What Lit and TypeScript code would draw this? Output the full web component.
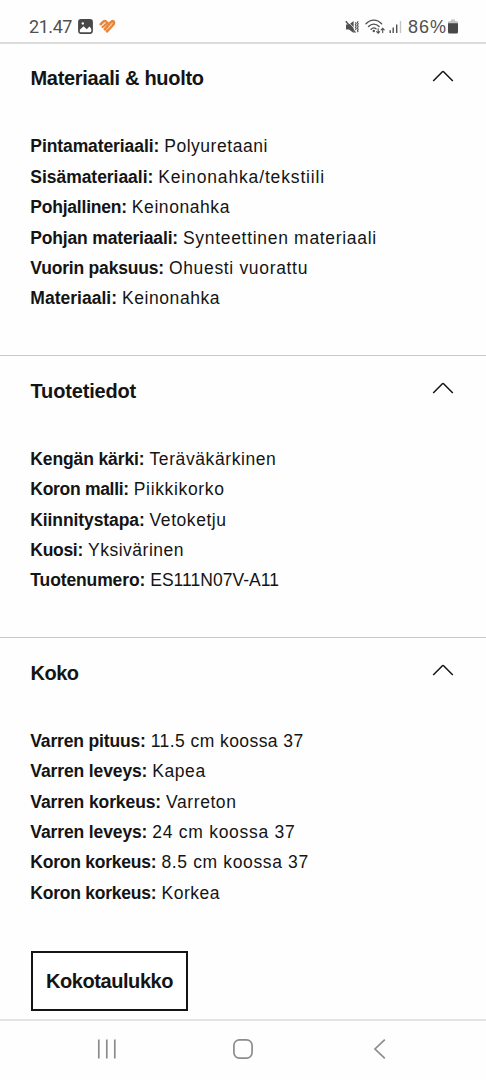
import { LitElement, html, css } from "lit";
import { customElement, property } from "lit/decorators.js";
import { styleMap } from "lit/directives/style-map.js";

interface Row { label: string; value: string; labelTracking: number; valueTracking: number; }
interface Section { title: string; titleTracking: number; rows: Row[]; action?: string; }

const row = (label: string, labelTracking: number, value: string, valueTracking: number): Row => ({ label, value, labelTracking, valueTracking });

const SECTIONS: Section[] = [
  {
    title: "Materiaali & huolto",
    titleTracking: -0.3,
    rows: [
      row("Pintamateriaali:", -0.09, "Polyuretaani", 0.53),
      row("Sisämateriaali:", -0.04, "Keinonahka/tekstiili", 0.85),
      row("Pohjallinen:", -0.22, "Keinonahka", 0.57),
      row("Pohjan materiaali:", -0.17, "Synteettinen materiaali", 0.69),
      row("Vuorin paksuus:", -0.19, "Ohuesti vuorattu", 0.67),
      row("Materiaali:", 0.01, "Keinonahka", 0.57),
    ],
  },
  {
    title: "Tuotetiedot",
    titleTracking: -0.16,
    rows: [
      row("Kengän kärki:", -0.12, "Teräväkärkinen", 0.59),
      row("Koron malli:", -0.3, "Piikkikorko", 0.65),
      row("Kiinnitystapa:", -0.1, "Vetoketju", 0.55),
      row("Kuosi:", -0.3, "Yksivärinen", 0.52),
      row("Tuotenumero:", -0.12, "ES111N07V-A11", 0.03),
    ],
  },
  {
    title: "Koko",
    titleTracking: -0.5,
    rows: [
      row("Varren pituus:", -0.16, "11.5 cm koossa 37", 0.43),
      row("Varren leveys:", -0.12, "Kapea", 0.55),
      row("Varren korkeus:", -0.1, "Varreton", 0.57),
      row("Varren leveys:", -0.12, "24 cm koossa 37", 0.72),
      row("Koron korkeus:", -0.23, "8.5 cm koossa 37", 0.64),
      row("Koron korkeus:", -0.23, "Korkea", 0.55),
    ],
    action: "Kokotaulukko",
  },
];

const tracking = (px: number) => styleMap({ letterSpacing: `${px}px` });

@customElement("status-bar")
class StatusBar extends LitElement {
  static styles = css`
    :host { display: flex; align-items: center; box-sizing: border-box; height: 44px; padding: 11px 28px 0 29px; border-bottom: 2px solid #dcdcdc; color: #505050; }
    .time { font: 18px/32px Roboto, sans-serif; width: 49px; letter-spacing: -0.45px; }
    .spacer { flex: 1; }
    .battery-text { font: 18px/32px "Liberation Sans", sans-serif; letter-spacing: 1px; margin-left: 6px; }
    svg { display: block; flex: none; }
    .heart { margin-left: 6px; }
    .wifi { margin-left: 5px; }
    .signal { margin-left: 4px; }
    .battery { margin-left: 1px; }
  `;
  render() {
    return html`
      <span class="time">21.47</span>
      <svg width="15" height="15" viewBox="0 0 15 15">
        <rect x=".9" y=".9" width="13.2" height="13.2" rx="2" fill="#fff" stroke="#484848" stroke-width="1.6" />
        <path d="M1 1H14V10.5L11.4 7.6L8.8 10.2L5.6 7.2L1 11.5Z" fill="#484848" />
        <circle cx="4.8" cy="4.4" r="1.2" fill="#fff" />
      </svg>
      <svg class="heart" width="17" height="15" viewBox="0 0 17 15" fill="none" stroke="#e8873c" stroke-linecap="round" stroke-linejoin="round">
        <path d="M1.7 5.2L4.5 2.6Q5.8 1.6 7 2.6" stroke-width="2.6" />
        <path d="M3.6 8L8.6 3.6" stroke-width="2.3" />
        <path d="M5.9 10.2L12 3.1Q13.6 1.4 14.7 2.9Q15.4 4.4 14.2 5.7L8 12.2" stroke-width="2.7" />
        <path d="M8.1 10.3L12 6.2" stroke="#fbe3cf" stroke-width=".7" />
        <path d="M3.1 6.4L6.3 3.8" stroke="#fbe3cf" stroke-width=".7" />
      </svg>
      <span class="spacer"></span>
      <svg width="15" height="14" viewBox="0 0 15 14">
        <path d="M1 4.6H4L8.6 1V13L4 9.5H1Z" fill="#505050" />
        <path d="M2.2 .8L10 9" stroke="#fff" stroke-width=".8" />
        <path d="M.8 1.2L10.5 12.6" stroke="#505050" stroke-width="1.4" />
        <path d="M10.4 2.2l.8 1.2-.8 1.3.8 1.3-.8 1.3.8 1.3-.8 1.3M13.2 1.2l-.8 1.3.8 1.3-.8 1.4.8 1.3-.8 1.5.8 1.4-.8 1.4.8 1.3" stroke="#505050" stroke-width="1.1" fill="none" />
      </svg>
      <svg class="wifi" width="20" height="15" viewBox="0 0 20 15" fill="none" stroke="#505050" stroke-width="1.4" stroke-linecap="round">
        <path d="M1 4.7C5.5-.1 12.1-.1 16.6 4.7M3.5 7.6C6.7 4.3 10.9 4.3 14.1 7.6M6.1 10.2C7.8 8.6 9.6 8.6 11 9.7" />
        <circle cx="8.8" cy="12" r="1.2" fill="#505050" stroke="none" />
        <path d="M13.2 9.8V14M11.7 12.6l1.5 1.5 1.5-1.5M17.7 13.6V9.4M16.2 10.9l1.5-1.6 1.5 1.6" stroke-width="1.1" />
      </svg>
      <svg class="signal" width="13" height="13" viewBox="0 0 13 13">
        <path d="M1.2 13V10.3M4.2 13V7.5M7.7 13V4.5" stroke="#505050" stroke-width="1.4" />
        <path d="M11.5 13V1" stroke="#c4c4c4" stroke-width="1.4" />
      </svg>
      <span class="battery-text">86%</span>
      <svg class="battery" width="10" height="15" viewBox="0 0 10 15">
        <path d="M3 .5H7V2H8.5Q10 2 10 3.5V6H0V3.5Q0 2 1.5 2H3Z" fill="#c4c4c4" />
        <path d="M0 4.2H10V13Q10 14.5 8.5 14.5H1.5Q0 14.5 0 13Z" fill="#484848" />
      </svg>
    `;
  }
}

@customElement("detail-section")
class DetailSection extends LitElement {
  @property({ attribute: false }) section!: Section;
  static styles = css`
    :host { display: block; color: #141414; font-family: "Liberation Sans", Arial, sans-serif; }
    .header { display: flex; justify-content: space-between; align-items: center; height: 68.4px; padding: 0 32px 0 30.5px; }
    .title { margin: 0; font-size: 20px; line-height: 30px; font-weight: 700; }
    .chevron { display: block; margin-bottom: 5px; }
    .rows { margin: 0; padding: 19px 30.3px 41.7px; }
    .row { display: flex; height: 30.4px; align-items: center; font-size: 17.5px; line-height: 30.4px; white-space: pre; }
    .label { font-weight: 700; margin-right: 5px; }
    .value { margin: 0; }
    .action { display: block; box-sizing: border-box; width: 157px; height: 60px; margin: 1px 0 0 31px; padding: 0; background: #fff; border: 2px solid #141414; color: #141414; font: 700 20px/30px "Liberation Sans", Arial, sans-serif; letter-spacing: -0.42px; }
  `;
  render() {
    const s = this.section;
    return html`
      <div class="header">
        <h2 class="title" style=${tracking(s.titleTracking)}>${s.title}</h2>
        <svg class="chevron" width="22" height="12" viewBox="0 0 22 12" fill="none" stroke="#141414" stroke-width="1.5">
          <path d="M1.2 11L10.4 1.8Q11 1.2 11.6 1.8L20.8 11" />
        </svg>
      </div>
      <dl class="rows">
        ${s.rows.map((r) => html`<div class="row"><dt class="label" style=${tracking(r.labelTracking)}>${r.label}</dt><dd class="value" style=${tracking(r.valueTracking)}>${r.value}</dd></div>`)}
      </dl>
      ${s.action ? html`<button class="action">${s.action}</button>` : ""}
    `;
  }
}

@customElement("nav-bar")
class NavBar extends LitElement {
  static styles = css`
    :host { display: flex; box-sizing: border-box; height: 61px; padding: 0 38px 3px; border-top: 2px solid #e4e4e4; background: #fefefe; }
    .slot { flex: 1; display: flex; align-items: center; justify-content: center; }
    svg { display: block; fill: none; stroke: #8c8c8c; stroke-width: 1.7; }
  `;
  render() {
    return html`
      <div class="slot"><svg width="20" height="20" viewBox="0 0 20 20"><path d="M2.8 .5V19.5M10.8 .5V19.5M18.8 .5V19.5" /></svg></div>
      <div class="slot"><svg width="20" height="20" viewBox="0 0 20 20"><rect x=".9" y=".9" width="18.2" height="18.2" rx="5.5" /></svg></div>
      <div class="slot"><svg width="20" height="20" viewBox="0 0 20 20"><path d="M14.8 .7L5 10L14.8 19.3" /></svg></div>
    `;
  }
}

@customElement("app-root")
class AppRoot extends LitElement {
  static styles = css`
    :host { display: flex; flex-direction: column; height: 1080px; overflow: hidden; background: #fefefe; }
    .content { flex: 1; min-height: 0; overflow: hidden; }
    .section + .section { border-top: 1px solid #c8c8c8; }
  `;
  render() {
    return html`
      <status-bar></status-bar>
      <main class="content">
        ${SECTIONS.map((s) => html`<detail-section class="section" .section=${s}></detail-section>`)}
      </main>
      <nav-bar></nav-bar>
    `;
  }
}
